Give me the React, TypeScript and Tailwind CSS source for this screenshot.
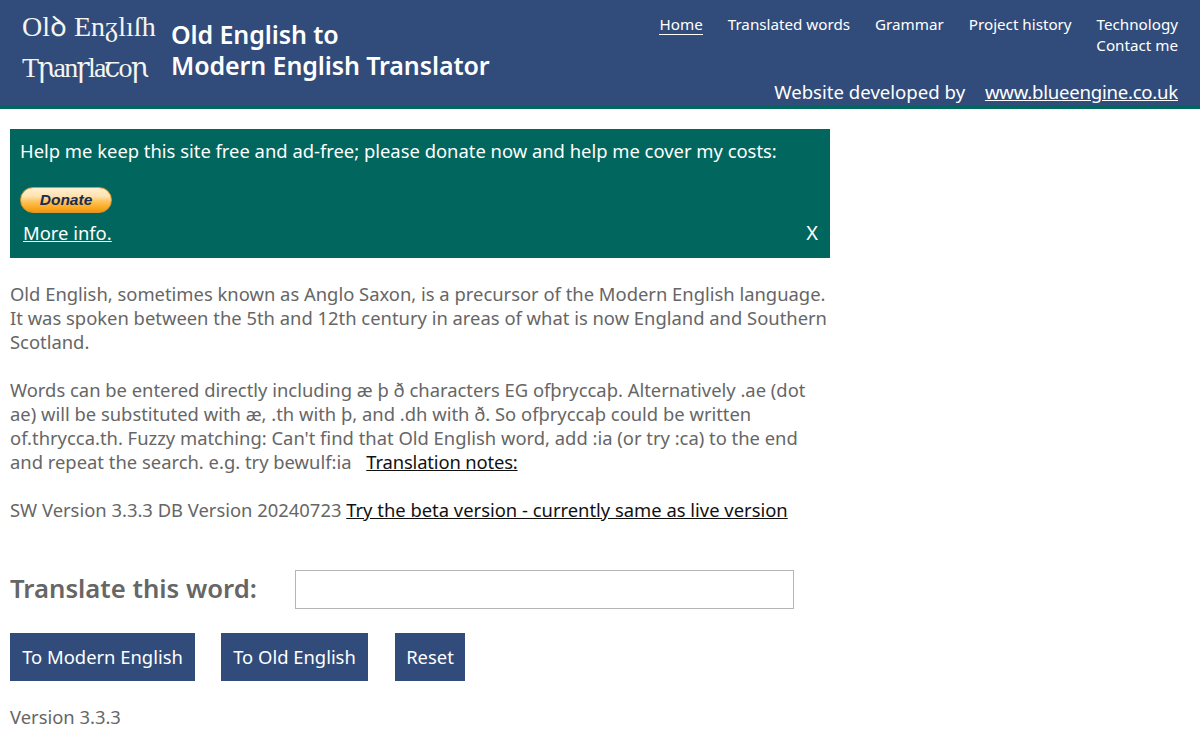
const font = "font-['Noto_Sans','Open_Sans',sans-serif]";

const navLinks = ['Translated words', 'Grammar', 'Project history', 'Technology'];

function Header() {
    return (
        <header className="h-[109px] bg-[#314c7a] border-b-[4px] border-[#00665e] flex justify-between text-white">
            <div className="flex">
                <div className="ml-[22px] mt-[6px] w-[140px] font-['Liberation_Serif','DejaVu_Serif',serif] text-[28px] leading-[41px] whitespace-nowrap text-[#f4f4f0]">
                    <div>Olꝺ Enᵹlıſh</div>
                    <div className="tracking-[-1.8px]">Tꞃanꞅlaꞇoꞃ</div>
                </div>
                <div className="ml-[9px] mt-[19px] text-[25px] leading-[31px] font-semibold tracking-[-0.1px]">
                    <div>Old English to</div>
                    <div>Modern English Translator</div>
                </div>
            </div>
            <div className="mr-[22px] flex flex-col items-end">
                <nav className="mt-[14px] text-[15.2px] leading-[21px] text-right">
                    <div className="flex gap-[25px]">
                        <a className="border-b border-white leading-[20px] h-[21px]">Home</a>
                        {navLinks.map(l => <a key={l}>{l}</a>)}
                    </div>
                    <a>Contact me</a>
                </nav>
                <div className="mt-[24px] text-[18.6px] leading-[24px]">
                    Website developed by <a className="ml-[15px] underline tracking-[-0.25px]">www.blueengine.co.uk</a>
                </div>
            </div>
        </header>
    );
}

export default function App() {
    return (
        <div className={`${font} w-[1200px] h-[740px] overflow-hidden bg-white text-[#666666] text-[18.4px] leading-[24px]`}>
            <Header />
            <main className="px-[10px] pt-[20px]">
                <div className="w-[820px] h-[129px] bg-[#00665e] text-white px-[10px] pt-[10px]">
                    <p>Help me keep this site free and ad-free; please donate now and help me cover my costs:</p>
                    <button className="mt-[24px] block w-[92px] h-[26px] rounded-full border border-[#d9962e] bg-[linear-gradient(to_bottom,#fff0d4_0%,#ffe2ae_35%,#ffc45e_55%,#fbab26_80%,#f0950e_100%)] text-[#162c58] text-[15.5px] leading-[22px] font-bold italic font-['Liberation_Sans',sans-serif]">Donate</button>
                    <div className="flex justify-between mt-[8px] pl-[3px] pr-[2px]">
                        <a className="underline">More info.</a>
                        <span className="text-[20px]">X</span>
                    </div>
                </div>
                <p className="mt-[24px] w-[820px]">Old English, sometimes known as Anglo Saxon, is a precursor of the Modern English language. It was spoken between the 5th and 12th century in areas of what is now England and Southern Scotland.</p>
                <p className="mt-[24px] w-[820px]">Words can be entered directly including æ þ ð characters EG ofþryccaþ. Alternatively .ae (dot ae) will be substituted with æ, .th with þ, and .dh with ð. So ofþryccaþ could be written of.thrycca.th. Fuzzy matching: Can't find that Old English word, add :ia (or try :ca) to the end and repeat the search. e.g. try bewulf:ia <a className="ml-[10px] underline text-[#111111] tracking-[-0.15px]">Translation notes:</a></p>
                <p className="mt-[24px]">SW Version 3.3.3 DB Version 20240723 <a className="underline text-[#111111]">Try the beta version - currently same as live version</a></p>
                <div className="mt-[48px] flex items-center">
                    <label className="w-[285px] text-[25.7px] font-semibold leading-[37px] pb-[2px]">Translate this word:</label>
                    <input className="w-[499px] h-[39px] border border-[#b5b5b5] bg-white" />
                </div>
                <div className="mt-[24px] flex text-white">
                    <button className="h-[48px] w-[185px] bg-[#314c7a]">To Modern English</button>
                    <button className="ml-[26px] h-[48px] w-[147px] bg-[#314c7a]">To Old English</button>
                    <button className="ml-[27px] h-[48px] w-[70px] bg-[#314c7a]">Reset</button>
                </div>
                <p className="mt-[24px]">Version 3.3.3</p>
            </main>
        </div>
    );
}
